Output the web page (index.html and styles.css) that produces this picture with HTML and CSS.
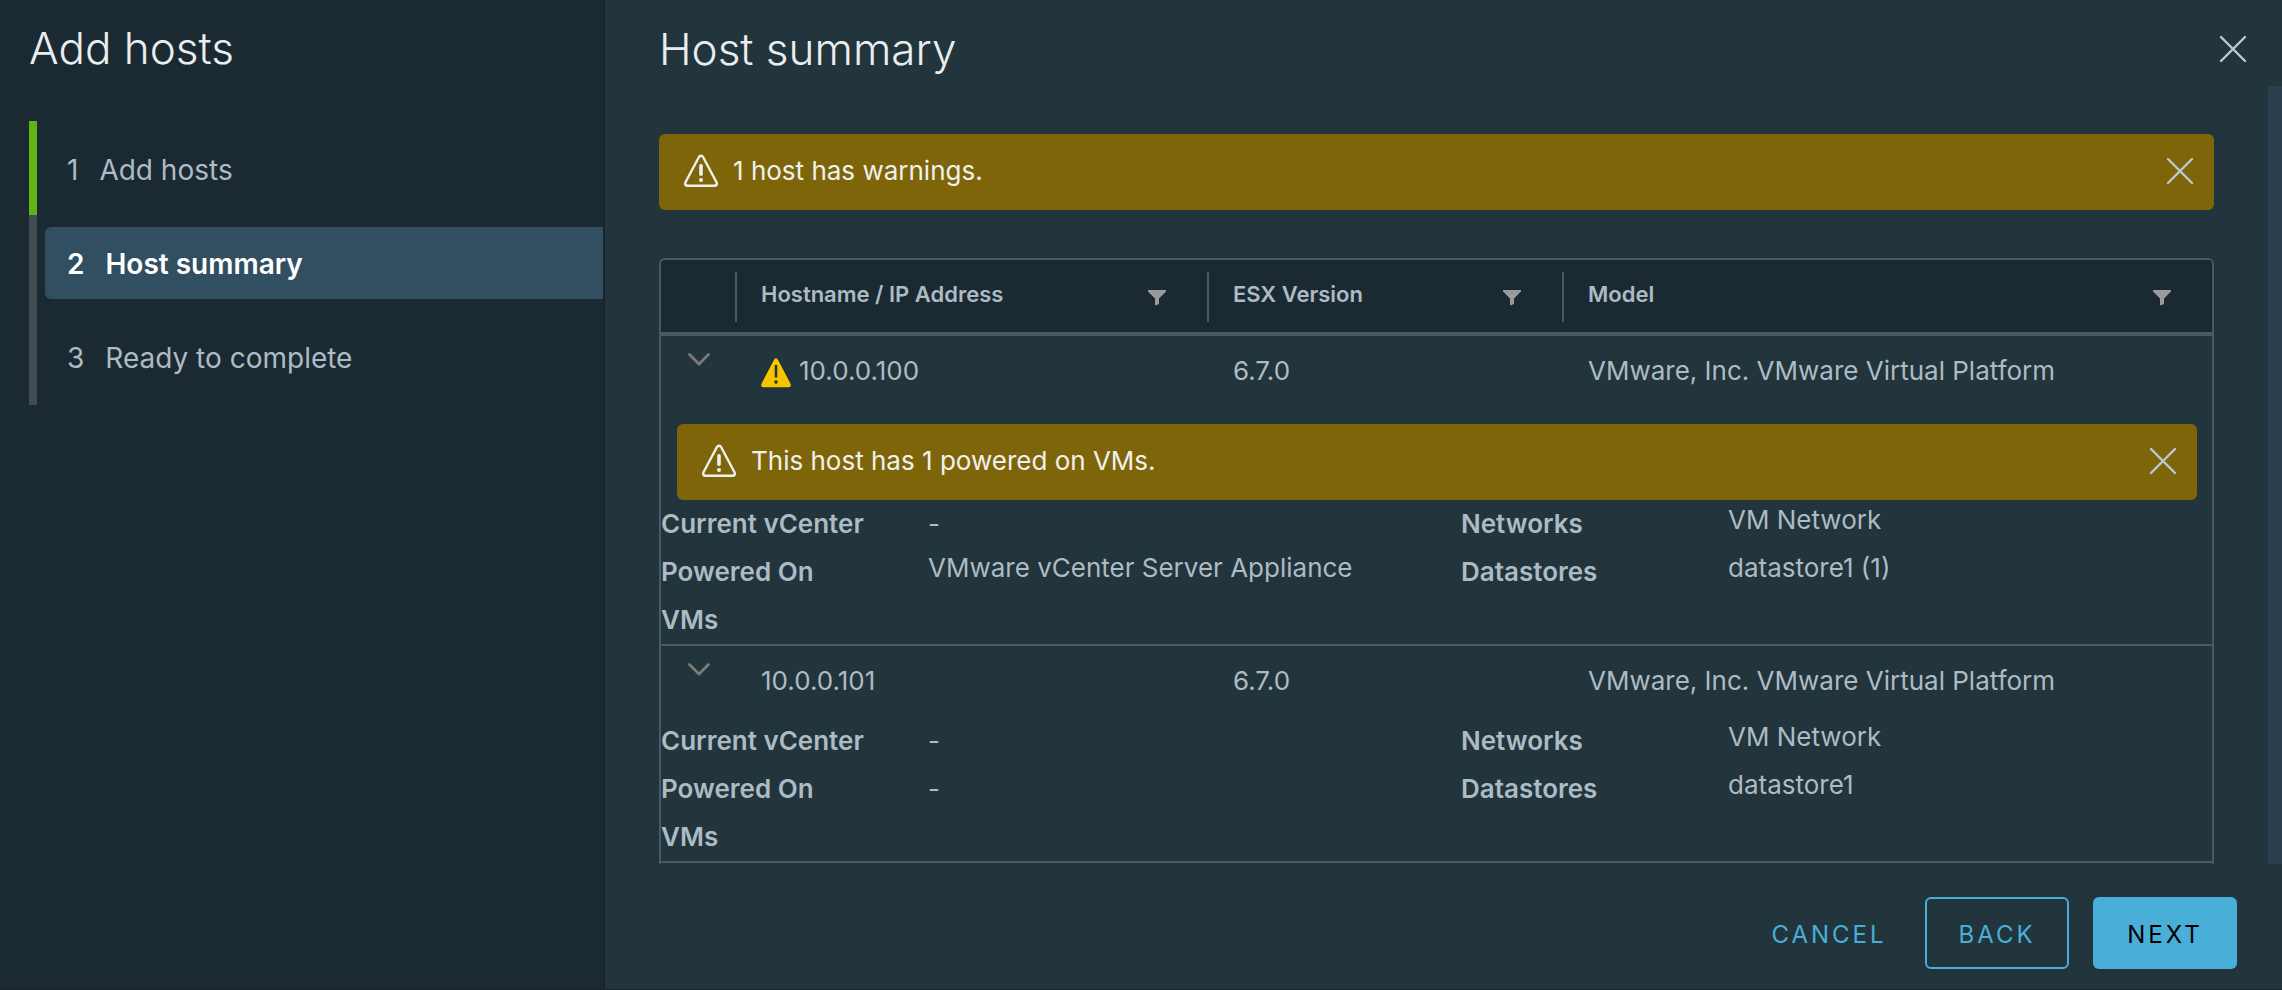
FILE: index.html
```html
<!DOCTYPE html>
<html lang="en">
<head>
<meta charset="utf-8">
<title>Add hosts</title>
<link rel="stylesheet" href="styles.css">
</head>
<body>
<svg class="sprite" aria-hidden="true">
  <symbol id="close" viewBox="0 0 28 28"><path d="M2 2l24 24M26 2L2 26" fill="none" stroke="currentColor" stroke-width="2.4" stroke-linecap="round"/></symbol>
  <symbol id="warn" viewBox="0 0 36 34"><path d="M15.800 3.200 2.500 28.200c-1 2 0 3.600 2.200 3.600h26.600c2.200 0 3.200-1.600 2.200-3.600L20.200 3.200c-1-1.900-3.400-1.900-4.400 0z" fill="none" stroke="currentColor" stroke-width="2.400"/><path d="M18 11.800v8.400" fill="none" stroke="currentColor" stroke-width="3.600" stroke-linecap="round"/><circle cx="18" cy="26" r="2" fill="currentColor"/></symbol>
  <symbol id="warn-solid" viewBox="0 0 30 30"><path d="M12.900 1.900.6 25.600C-.4 27.700.6 29.300 2.800 29.300h24.400c2.200 0 3.200-1.600 2.200-3.700L17.100 1.900c-1-1.900-3.200-1.900-4.200 0z" fill="#fac400"/><path d="M15 8v10.500" fill="none" stroke="#22343c" stroke-width="2.600" stroke-linecap="round"/><circle cx="15" cy="24" r="1.800" fill="#22343c"/></symbol>
  <symbol id="chevron" viewBox="0 0 24 16"><path d="M2.500 2.500l9.500 9.500 9.500-9.500" fill="none" stroke="currentColor" stroke-width="2.800" stroke-linecap="round"/></symbol>
  <symbol id="filter" viewBox="0 0 18 16"><path d="M0 0h18v1.500l-7 7V14l-4 1.500V8.500l-7-7z" fill="currentColor"/></symbol>
</svg>
<div class="wizard">
  <aside class="sidebar">
    <h1 class="title">Add hosts</h1>
    <ol class="steps">
      <li class="step step-done"><button class="step-btn"><span>1</span><span>Add hosts</span></button></li>
      <li class="step"><button class="step-btn step-current" aria-current="step"><span>2</span><span>Host summary</span></button></li>
      <li class="step"><button class="step-btn"><span>3</span><span>Ready to complete</span></button></li>
    </ol>
  </aside>
  <main class="page">
    <header class="page-head">
      <h2 class="title">Host summary</h2>
      <button class="icon-btn" aria-label="Close wizard"><svg class="i-close"><use href="#close"/></svg></button>
    </header>
    <div class="scroll">
      <div class="content">
        <div class="alert">
          <svg class="i-warn"><use href="#warn"/></svg>
          <span class="alert-text">1 host has warnings.</span>
          <button class="icon-btn" aria-label="Dismiss"><svg class="i-close"><use href="#close"/></svg></button>
        </div>
        <div class="grid">
          <table class="hosts">
            <colgroup><col class="c-toggle"><col class="c-host"><col class="c-version"><col></colgroup>
            <thead>
              <tr>
                <th></th>
                <th><div class="th-in">Hostname / IP Address<button class="icon-btn" aria-label="Filter hostname"><svg class="i-filter"><use href="#filter"/></svg></button></div></th>
                <th><div class="th-in">ESX Version<button class="icon-btn" aria-label="Filter version"><svg class="i-filter"><use href="#filter"/></svg></button></div></th>
                <th><div class="th-in">Model<button class="icon-btn" aria-label="Filter model"><svg class="i-filter"><use href="#filter"/></svg></button></div></th>
              </tr>
            </thead>
            <tbody>
              <tr class="host">
                <td class="toggle"><button class="icon-btn" aria-label="Collapse 10.0.0.100"><svg class="i-chevron"><use href="#chevron"/></svg></button></td>
                <td><div class="host-name"><svg class="i-solid"><use href="#warn-solid"/></svg>10.0.0.100</div></td>
                <td>6.7.0</td>
                <td>VMware, Inc. VMware Virtual Platform</td>
              </tr>
              <tr class="detail">
                <td colspan="4">
                  <div class="alert alert-inner">
                    <svg class="i-warn"><use href="#warn"/></svg>
                    <span class="alert-text">This host has 1 powered on VMs.</span>
                    <button class="icon-btn" aria-label="Dismiss"><svg class="i-close"><use href="#close"/></svg></button>
                  </div>
                  <dl class="facts">
                    <dt>Current vCenter</dt><dd class="none">-</dd><dt>Networks</dt><dd>VM Network</dd>
                    <dt>Powered On VMs</dt><dd>VMware vCenter Server Appliance</dd><dt>Datastores</dt><dd>datastore1 (1)</dd>
                  </dl>
                </td>
              </tr>
              <tr class="host">
                <td class="toggle"><button class="icon-btn" aria-label="Collapse 10.0.0.101"><svg class="i-chevron"><use href="#chevron"/></svg></button></td>
                <td>10.0.0.101</td>
                <td>6.7.0</td>
                <td>VMware, Inc. VMware Virtual Platform</td>
              </tr>
              <tr class="detail">
                <td colspan="4">
                  <dl class="facts">
                    <dt>Current vCenter</dt><dd class="none">-</dd><dt>Networks</dt><dd>VM Network</dd>
                    <dt>Powered On VMs</dt><dd class="none">-</dd><dt>Datastores</dt><dd>datastore1</dd>
                  </dl>
                </td>
              </tr>
            </tbody>
          </table>
        </div>
      </div>
      <div class="track"></div>
    </div>
    <footer class="actions">
      <button class="btn">Cancel</button>
      <button class="btn btn-outline">Back</button>
      <button class="btn btn-primary">Next</button>
    </footer>
  </main>
</div>
</body>
</html>
```
FILE: styles.css
```css
* { box-sizing: border-box; }
body {
  margin: 0;
  background: #22343c;
  color: #adbbc4;
  font: 400 26px/36px Inter, "Open Sans", sans-serif;
}
button {
  margin: 0;
  padding: 0;
  border: 0;
  background: none;
  color: inherit;
  font: inherit;
  cursor: pointer;
}
svg { display: block; flex: none; }
.sprite { display: none; }
.wizard {
  display: flex;
  height: 100vh;
  border-bottom: 1px solid #1a222c;
}
.title {
  margin: 0;
  color: #eaedf0;
  font-size: 44px;
  font-weight: 300;
  line-height: 48px;
}

/* Step navigation */
.sidebar {
  flex: none;
  width: 605px;
  padding: 24px 0 0 29px;
  border-right: 2px solid #17242b;
  background: #1b2a32;
}
.steps {
  margin: 49px 0 0;
  padding: 0;
  list-style: none;
  font-size: 28px;
}
.step {
  height: 94px;
  padding: 12px 0 0 8px;
  border-left: 8px solid #414c53;
}
.step:last-child { height: 96px; }
.step-done { border-color: #60b515; }
.step-btn {
  display: flex;
  align-items: center;
  gap: 21px;
  width: 100%;
  height: 72px;
  padding: 2px 0 0 22px;
  border-radius: 6px 0 0 6px;
  text-align: left;
}
.step-current {
  background: #324f61;
  color: #fff;
  font-weight: 600;
}

/* Page */
.page {
  display: flex;
  flex: 1;
  flex-direction: column;
  min-width: 0;
}
.page-head {
  display: flex;
  align-items: center;
  justify-content: space-between;
  flex: none;
  height: 86px;
  padding: 12px 35px 0 54px;
}
.icon-btn {
  display: block;
  flex: none;
}
.i-close { width: 28px; height: 28px; color: #bccad2; }
.i-warn { width: 36px; height: 34px; }
.i-solid { width: 30px; height: 30px; }
.i-chevron { width: 24px; height: 16px; color: #7d7b7a; }
.i-filter { width: 18px; height: 16px; color: #9a9a9a; }
.scroll {
  display: flex;
  flex: 1;
  min-height: 0;
  overflow: hidden;
}
.content {
  flex: 1;
  min-width: 0;
  padding: 48px 54px 0;
}
.track {
  flex: none;
  width: 14px;
  background: #293f4d;
}
.alert {
  display: flex;
  align-items: center;
  gap: 14px;
  height: 76px;
  padding: 0 20px 2px 24px;
  border-radius: 6px;
  background: #7f650a;
  color: #eff1ee;
}
.alert-text { flex: 1; }
.alert-inner { margin: 0 15px 0 16px; }

/* Hosts table */
.grid {
  min-height: 100%;
  margin-top: 48px;
  border: 2px solid #495966;
  border-bottom: 0;
  border-radius: 6px 6px 0 0;
  overflow: hidden;
}
.hosts {
  width: 100%;
  table-layout: fixed;
  border-collapse: separate;
  border-spacing: 0;
}
.c-toggle { width: 74px; }
.c-host { width: 472px; }
.c-version { width: 355px; }
th {
  height: 76px;
  padding: 12px 0 10px;
  border-bottom: 4px solid #495966;
  background: #1b2a32;
  font-size: 22px;
  font-weight: 600;
  line-height: 46px;
  text-align: left;
}
.th-in {
  display: flex;
  align-items: center;
  justify-content: space-between;
  height: 50px;
  padding: 0 41px 6px 24px;
  border-left: 2px solid #495966;
}
.th-in .icon-btn { padding-top: 8px; }
td { padding: 0; }
.host td {
  height: 71px;
  padding: 17px 0 18px 26px;
  vertical-align: top;
}
.host .toggle { padding: 16px 0 0 26px; }
.host:first-child td { height: 88px; }
.host-name {
  display: flex;
  align-items: center;
  gap: 8px;
}
.host-name svg { margin-top: 4px; }
.detail td { border-bottom: 2px solid #495966; }
.facts {
  display: grid;
  grid-template-columns: 267fr 533fr 267fr 484fr;
  margin: 0;
  line-height: 48px;
}
.facts dt {
  padding-right: 56px;
  font-weight: 600;
}
.facts dd { margin: 0; line-height: 40px; }
.facts .none { line-height: 48px; }

/* Footer */
.actions {
  display: flex;
  align-items: center;
  justify-content: flex-end;
  gap: 24px;
  flex: none;
  height: 125px;
  padding: 13px 45px 0 0;
}
.btn {
  min-width: 144px;
  height: 72px;
  padding: 4px 0 0;
  border: 2px solid transparent;
  border-radius: 6px;
  color: #49afd9;
  font-size: 24px;
  letter-spacing: 3px;
  text-transform: uppercase;
}
.btn-outline { border-color: #49afd9; }
.btn-primary { background: #49afd9; color: #000; }
```
